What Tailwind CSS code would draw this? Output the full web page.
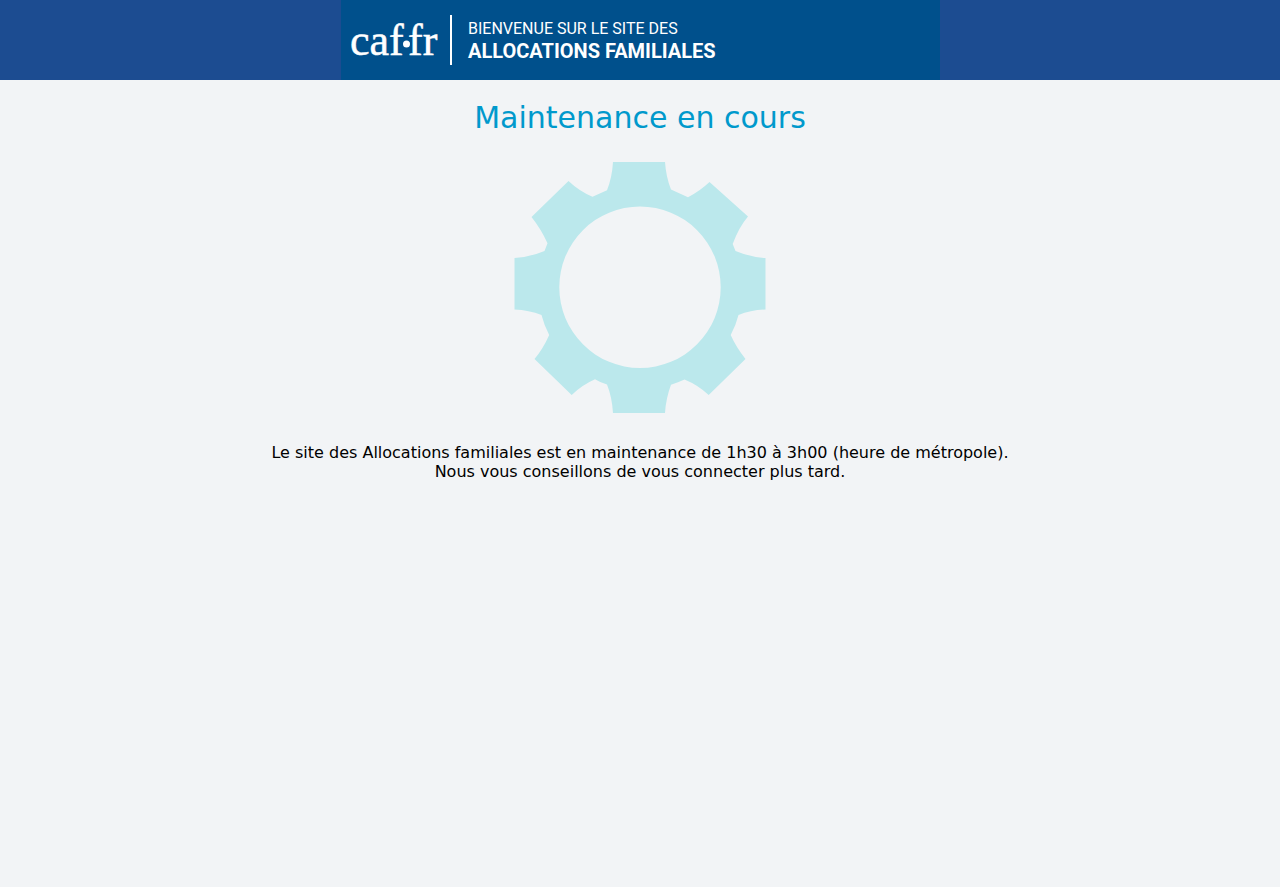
<!DOCTYPE html>
<html lang="fr">
<head>
<meta charset="utf-8">
<meta name="viewport" content="width=device-width, initial-scale=1">
<title>Maintenance en cours</title>
<script src="https://cdn.jsdelivr.net/npm/@tailwindcss/browser@4"></script>
</head>
<body class="min-h-screen bg-[#f2f4f6] font-['DejaVu_Sans',sans-serif] text-base text-black">
<header class="bg-[#1c4c91]">
  <div class="mx-auto flex h-20 w-full max-w-[600px] items-center border-l border-[#1c4c91] bg-[#00508c] pl-[9px] font-[Roboto,sans-serif] text-white">
    <svg class="h-20 w-[90px] shrink-0" viewBox="0 0 90 80" role="img" aria-label="caf.fr" fill="currentColor" font-family="'Liberation Serif', serif" font-size="44">
      <g stroke="currentColor" stroke-width="0.5">
        <text x="0" y="55">caf</text>
        <text x="58" y="55">fr</text>
      </g>
      <circle cx="56.500" cy="44" r="3.500"/>
    </svg>
    <div class="ml-[10px] h-[50px] w-0.5 shrink-0 bg-white"></div>
    <p class="ml-4 whitespace-nowrap text-[16px] leading-[23px]">BIENVENUE SUR LE SITE DES <strong class="block text-[20px] leading-[23px] font-bold">ALLOCATIONS FAMILIALES</strong></p>
  </div>
</header>
<main class="flex flex-col items-center px-4 text-center">
  <h1 class="mt-5 text-[30px] leading-9 text-[#0099cc]">Maintenance en cours</h1>
  <svg class="mt-[26px] h-[251px] w-[252px]" viewBox="514 162 252 251" fill="#bbe8ec" fill-rule="evenodd" aria-hidden="true">
    <path d="M613 162H665Q666 177 671 189.500L688 197.200Q700 191 709.500 182L748 216.500Q739 227 732.700 244L735.500 251Q750 257 765.500 258V309.500Q751 310 738.500 315Q736 325 730.700 335Q736 347 745.500 359L708.700 395Q698 385 684.500 379.500Q678 382.500 671 384.800Q666 398 665 413H613Q612 397 607 384.500Q600 382.500 595 379.300Q582 385 571.700 395L534.500 359Q543 349 549.200 335Q544 325 541.500 315Q529 310 514.500 309.500V258Q530 257 544.500 251L547.500 243.200Q541 229 531.500 217L568.500 181Q579 191 592.500 196.800L607 190.200Q612 178 613 162ZM640 206.500A80.750 80.750 0 0 0 640 368A80.750 80.750 0 0 0 640 206.500Z"/>
  </svg>
  <p class="mt-[30px] leading-[19px]">Le site des Allocations familiales est en maintenance de 1h30 à 3h00 (heure de métropole).<br>Nous vous conseillons de vous connecter plus tard.</p>
</main>
</body>
</html>
